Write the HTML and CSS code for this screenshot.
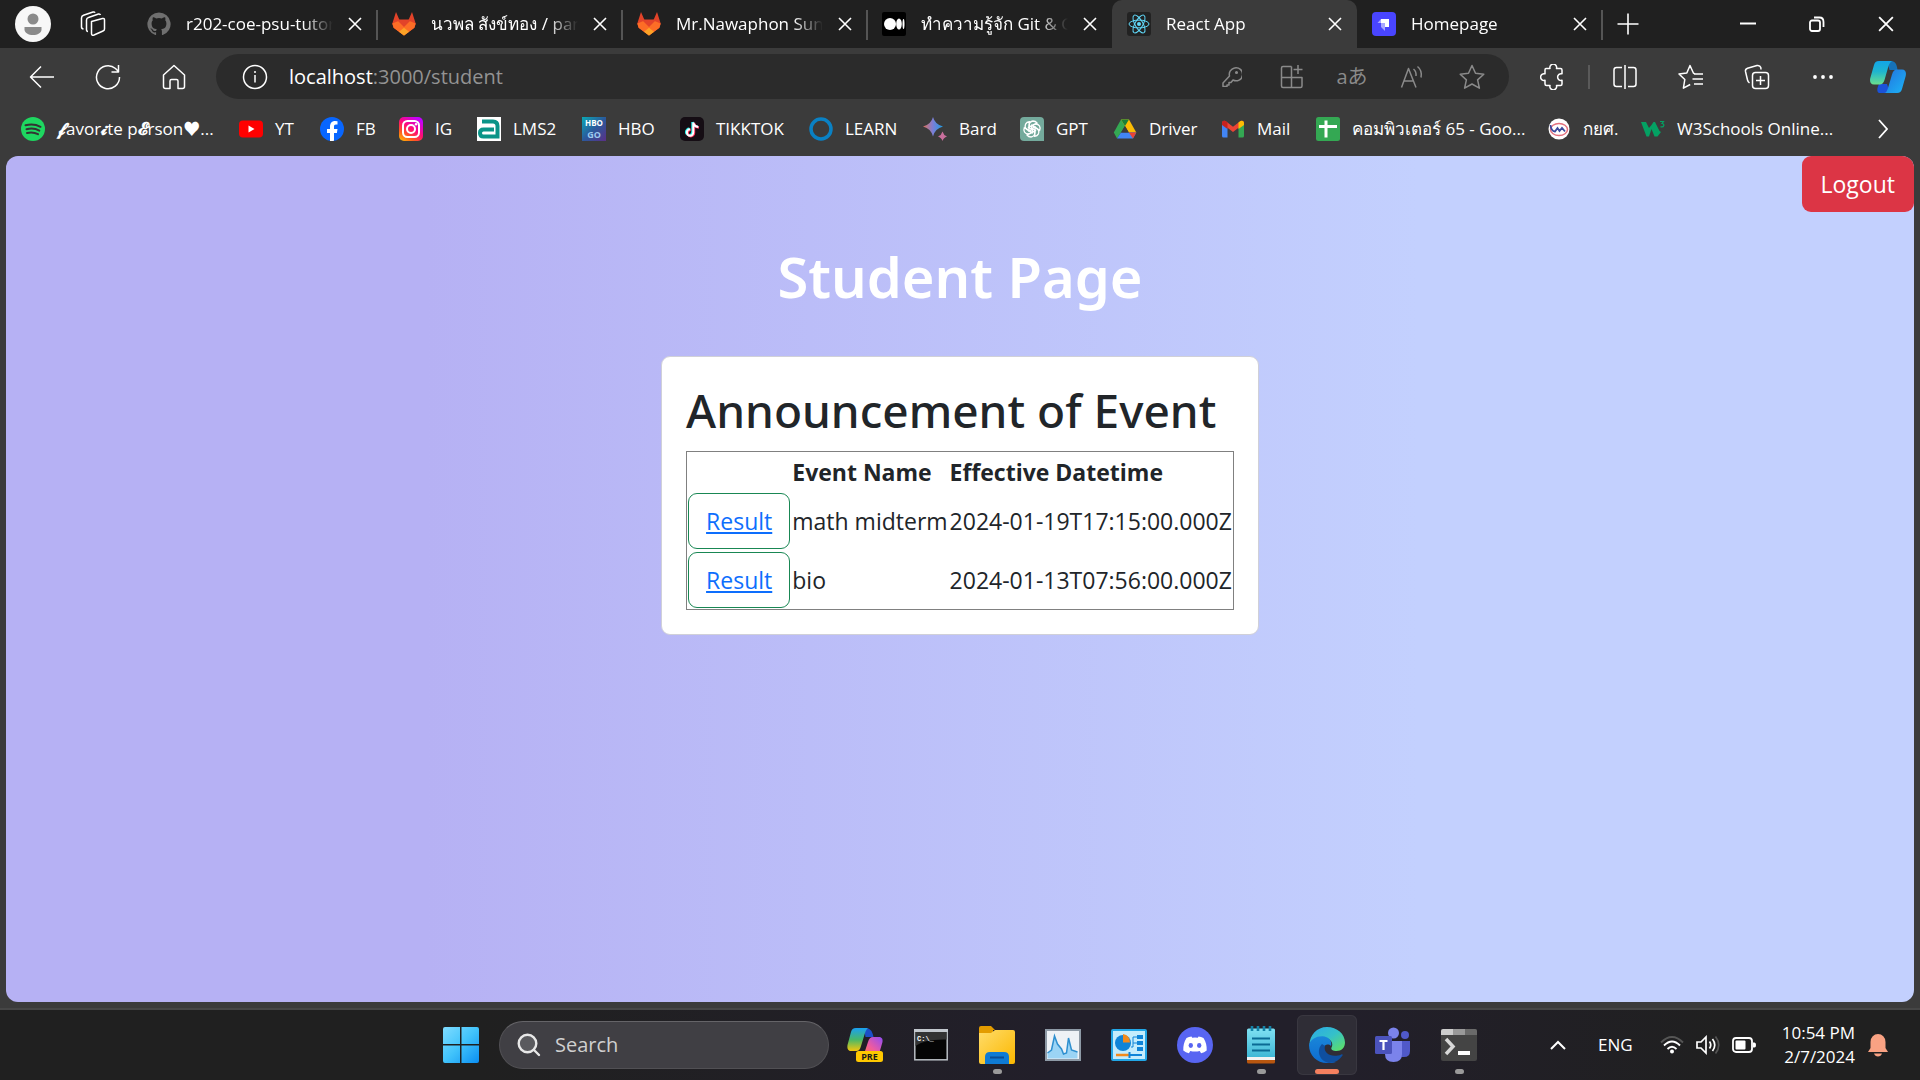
FILE: index.html
```html
<!DOCTYPE html>
<html lang="en">
<head>
<meta charset="utf-8">
<title>React App</title>
<link rel="stylesheet" href="styles.css">
</head>
<body>
<svg class="defs" aria-hidden="true">
  <defs>
    <linearGradient id="cp-a" x1="0" y1="0" x2="0" y2="1"><stop offset="0" stop-color="#12a5e8"/><stop offset=".45" stop-color="#1fb5cf"/><stop offset="1" stop-color="#6ae08d"/></linearGradient>
    <linearGradient id="cp-b" x1="0" y1="0" x2="1" y2="1"><stop offset="0" stop-color="#2370de"/><stop offset="1" stop-color="#1cb4f5"/></linearGradient>
    <linearGradient id="cp-c" x1="0" y1="0" x2="0" y2="1"><stop offset="0" stop-color="#1aa0f2"/><stop offset=".5" stop-color="#47b86a"/><stop offset="1" stop-color="#f5c60b"/></linearGradient>
    <linearGradient id="cp-d" x1="1" y1="0" x2="0" y2="1"><stop offset="0" stop-color="#8f4cf5"/><stop offset=".6" stop-color="#ee5ba0"/><stop offset="1" stop-color="#ff7a50"/></linearGradient>
    <linearGradient id="ig" x1="0" y1="1" x2=".7" y2="0"><stop offset="0" stop-color="#ffc800"/><stop offset=".3" stop-color="#ff5a1f"/><stop offset=".6" stop-color="#ff0a7a"/><stop offset="1" stop-color="#c400ff"/></linearGradient>
    <linearGradient id="hbo" x1="0" y1="0" x2="1" y2="1"><stop offset="0" stop-color="#0aa9b5"/><stop offset=".5" stop-color="#2a5a9c"/><stop offset="1" stop-color="#5b2f86"/></linearGradient>
    <linearGradient id="bard" x1="0" y1="0" x2="1" y2="0"><stop offset="0" stop-color="#e0705c"/><stop offset=".5" stop-color="#7a7fd8"/><stop offset="1" stop-color="#1e9be0"/></linearGradient>
    <linearGradient id="win" x1="0" y1="0" x2="1" y2="1"><stop offset="0" stop-color="#7fdcff"/><stop offset=".5" stop-color="#41c3fb"/><stop offset="1" stop-color="#0a8ef2"/></linearGradient>
    <linearGradient id="folder" x1="0" y1="0" x2="1" y2="1"><stop offset="0" stop-color="#ffdc6a"/><stop offset="1" stop-color="#fbb800"/></linearGradient>
    <linearGradient id="edge-top" x1="0" y1="0" x2="1" y2="1"><stop offset="0" stop-color="#2aa8ea"/><stop offset=".5" stop-color="#35c1c8"/><stop offset="1" stop-color="#63e25a"/></linearGradient>
    <linearGradient id="edge-body" x1="0" y1="0" x2="0" y2="1"><stop offset="0" stop-color="#1a86d9"/><stop offset="1" stop-color="#0d6cd0"/></linearGradient>
    <linearGradient id="note" x1="0" y1="0" x2="0" y2="1"><stop offset="0" stop-color="#7fe0f2"/><stop offset="1" stop-color="#3fb8d6"/></linearGradient>
    <symbol id="close" viewBox="0 0 14 14"><path d="M1 1l12 12M13 1L1 13" fill="none" stroke="#fff" stroke-width="1.6"/></symbol>
    <symbol id="gitlab" viewBox="0 0 24 24"><path d="M4 0l3.700 8.500h8.600L20 0l3.700 11.500-1.300 4.300L12 23.500 1.600 15.800.3 11.500z" fill="#e24329"/><path d="M.3 11.500l7.400-3 8.600 0 7.400 3-1.300 4.300L12 23.500 1.600 15.800z" fill="#fc6d26"/><path d="M4.500 7.500h15L12 15z" fill="#e24329"/><path d="M7 19.800l5-4 5 4-5 3.700z" fill="#fca326"/></symbol>
  </defs>
</svg>

<div class="browser">
  <header class="tabstrip">
    <button class="profile" aria-label="Profile"><svg width="36" height="36" viewBox="0 0 36 36"><circle cx="18" cy="18" r="18" fill="#f7f7f7"/><circle cx="18" cy="13" r="5.500" fill="#8a8a8a"/><path d="M9.500 21h17v2.500c0 3.500-4 5.500-8.500 5.500s-8.500-2-8.500-5.500z" fill="#8a8a8a"/></svg></button>
    <button class="workspaces" aria-label="Workspaces"><svg width="26" height="26" viewBox="0 0 26 26" fill="none" stroke="#fff" stroke-width="1.500" stroke-linejoin="round"><path d="M11.500 10.500l11-3q2-.4 2 1.500v9q0 1.500-1.500 2l-9 4q-2.500.8-2.500-1.500z"/><path d="M8 20.500q-1.500 0-1.500-2V9q0-2 2-2.500l10-3.500q1.500-.3 2 1"/><path d="M3.500 18q-2-.2-2-2V7q0-2 2-2.800L13 1q1.500-.4 2 .8"/></svg></button>
    <nav class="tabs" aria-label="Tabs">
      <div class="tab"><svg width="24" height="24" viewBox="0 0 24 24"><path fill="#6f6f6f" d="M12 .5a11.600 11.600 0 0 0-3.700 22.600c.6.100.8-.3.800-.6v-2.200c-3.200.7-3.900-1.400-3.900-1.400-.5-1.300-1.300-1.700-1.300-1.700-1.100-.7.100-.7.100-.7 1.200.1 1.800 1.200 1.800 1.200 1 1.800 2.700 1.300 3.400 1 .1-.8.4-1.300.7-1.600-2.600-.3-5.300-1.300-5.300-5.700 0-1.300.5-2.300 1.200-3.100-.1-.3-.5-1.500.1-3.100 0 0 1-.3 3.200 1.200a11 11 0 0 1 5.800 0c2.200-1.500 3.200-1.200 3.200-1.200.6 1.600.2 2.800.1 3.100.8.800 1.200 1.800 1.200 3.100 0 4.500-2.700 5.400-5.300 5.700.4.400.8 1.100.8 2.200v3.200c0 .3.200.7.800.6A11.600 11.600 0 0 0 12 .5z"/></svg><a class="tab-title" href="#">r202-coe-psu-tutor</a><button class="tab-close" aria-label="Close tab"><svg width="14" height="14"><use href="#close"/></svg></button></div>
      <div class="tab"><svg width="24" height="24"><use href="#gitlab"/></svg><a class="tab-title" href="#">นวพล สังข์ทอง / pan</a><button class="tab-close" aria-label="Close tab"><svg width="14" height="14"><use href="#close"/></svg></button></div>
      <div class="tab"><svg width="24" height="24"><use href="#gitlab"/></svg><a class="tab-title" href="#">Mr.Nawaphon Sun</a><button class="tab-close" aria-label="Close tab"><svg width="14" height="14"><use href="#close"/></svg></button></div>
      <div class="tab no-rule"><svg width="24" height="24" viewBox="0 0 24 24"><rect width="24" height="24" rx="2" fill="#000"/><circle cx="8" cy="12" r="6" fill="#fff"/><ellipse cx="17" cy="12" rx="2.800" ry="5.500" fill="#fff"/><ellipse cx="21.500" cy="12" rx="1" ry="5" fill="#fff"/></svg><a class="tab-title" href="#">ทำความรู้จัก Git &amp; G</a><button class="tab-close" aria-label="Close tab"><svg width="14" height="14"><use href="#close"/></svg></button></div>
      <div class="tab active"><svg width="24" height="24" viewBox="0 0 24 24"><rect width="24" height="24" rx="3" fill="#222"/><circle cx="12" cy="12" r="2" fill="#61dafb"/><g fill="none" stroke="#61dafb"><ellipse cx="12" cy="12" rx="10" ry="3.900"/><ellipse cx="12" cy="12" rx="10" ry="3.900" transform="rotate(60 12 12)"/><ellipse cx="12" cy="12" rx="10" ry="3.900" transform="rotate(120 12 12)"/></g></svg><a class="tab-title" href="#">React App</a><button class="tab-close" aria-label="Close tab"><svg width="14" height="14"><use href="#close"/></svg></button></div>
      <div class="tab"><svg width="24" height="24" viewBox="0 0 24 24"><rect width="24" height="24" rx="4" fill="#4945ff"/><path d="M9 7h8v8h-4v-4H9z" fill="#fff"/><path d="M5.500 11L9 7v4h4v8l-4-4v-4z" fill="#a9a7ff"/></svg><a class="tab-title" href="#">Homepage</a><button class="tab-close" aria-label="Close tab"><svg width="14" height="14"><use href="#close"/></svg></button></div>
    </nav>
    <button class="new-tab" aria-label="New tab"><svg width="22" height="22" viewBox="0 0 22 22" stroke="#fff" stroke-width="1.600"><path d="M11 .5v21M.5 11h21"/></svg></button>
    <div class="window-controls">
      <button aria-label="Minimize"><svg width="16" height="16" viewBox="0 0 16 16" stroke="#fff" stroke-width="2"><path d="M0 7.500h16"/></svg></button>
      <button aria-label="Restore"><svg width="16" height="16" viewBox="0 0 16 16" fill="none" stroke="#fff" stroke-width="1.800"><rect x="1" y="4.500" width="10" height="10.500" rx="2"/><path d="M5 1.500h5.500Q14.500 1.500 14.500 6v5"/></svg></button>
      <button aria-label="Close"><svg width="16" height="16"><use href="#close"/></svg></button>
    </div>
  </header>

  <div class="toolbar">
    <div class="nav-buttons">
      <button aria-label="Back"><svg width="26" height="24" viewBox="0 0 26 24"><path d="M25 12H2M12 1.500L1.500 12 12 22.500"/></svg></button>
      <button aria-label="Refresh"><svg width="26" height="26" viewBox="0 0 26 26"><path d="M24.500 13A11.500 11.500 0 1 1 20.500 4.500L23.500 7.500M23.500 1v7h-7"/></svg></button>
      <button aria-label="Home"><svg width="24" height="26" viewBox="0 0 24 26"><path d="M1.500 11L12 1.500 22.500 11v11.500q0 2-2 2H16V17q0-1.500-1.500-1.500h-5Q8 15.500 8 17v7.500H3.500q-2 0-2-2z"/></svg></button>
    </div>
    <div class="address">
      <button aria-label="Site information"><svg width="26" height="26" viewBox="0 0 26 26"><circle cx="13" cy="13" r="11.500"/><path d="M13 11v7.500M13 7v2"/></svg></button>
      <div class="url"><span class="host">localhost</span>:3000/student</div>
      <div class="address-actions">
        <button aria-label="Passwords"><svg width="20" height="20" viewBox="0 0 20 20"><path d="M12.500 1a6.500 6.500 0 1 1-1.500 12l-2 2.500H7V18H5v1.500H1V16l6.500-7A6.500 6.500 0 0 1 12.500 1z"/><circle cx="14.500" cy="5.500" r=".8"/></svg></button>
        <button aria-label="App available"><svg width="24" height="24" viewBox="0 0 24 24"><path d="M11.500 1.500H3q-1.500 0-1.500 1.500v18q0 1.500 1.500 1.500h17.500q1.500 0 1.500-1.500v-8.500H1.500M11.500 1.500v21M18 0v9M13.500 4.500h9"/></svg></button>
        <button class="translate" aria-label="Translate">aあ</button>
        <button aria-label="Read aloud"><svg width="24" height="24" viewBox="0 0 24 24"><path d="M1.500 22.500L8.500 3.500l7.500 19M4 16h9.500M13.500 4q3 2.500 2.500 7M17.500 1.500q5 4 3.500 11"/></svg></button>
        <button aria-label="Add favorite"><svg width="26" height="26" viewBox="0 0 26 26"><path d="M13 1.500l3.500 7.800 8.300.9-6.200 5.700 1.800 8.300L13 20l-7.400 4.200 1.800-8.300L1.200 10.200l8.300-.9z"/></svg></button>
      </div>
    </div>
    <div class="tool-buttons">
      <button aria-label="Extensions"><svg width="26" height="26" viewBox="0 0 26 26"><path d="M6 4.500h4a3.400 3.400 0 1 1 6.500 0h4q1.500 0 1.500 1.500v3.800a3.400 3.400 0 1 0 0 6.500V20q0 1.500-1.500 1.500h-4a3.400 3.400 0 1 1-6.500 0H6.500Q5 21.500 5 20v-3.700a3.400 3.400 0 1 1 0-6.500V6q0-1.500 1-1.500z"/></svg></button>
      <span class="rule"></span>
      <button aria-label="Split screen"><svg width="24" height="26" viewBox="0 0 24 26"><path d="M9 3.500H3.500q-2.500 0-2.500 2.500v14q0 2.500 2.500 2.500H9M15 3.500h5.500q2.500 0 2.500 2.500v14q0 2.500-2.500 2.500H15M12 1v24"/></svg></button>
      <button aria-label="Favorites"><svg width="26" height="26" viewBox="0 0 26 26"><path d="M17 10l-1.500-.8L12 1.500 8.800 9 1 10l5.800 5.500-1.400 8.700 6.800-3.700M16 10h9M14.500 15H25M16 20h9"/></svg></button>
      <button aria-label="Collections"><svg width="26" height="26" viewBox="0 0 26 26"><rect x="8.500" y="8.500" width="16" height="16" rx="3"/><path d="M16.500 12v9M12 16.500h9M5.500 19Q4 18 3.500 16L1.500 7.500Q1 5 3.500 4.200L13 1.500Q16 1 16.800 3.500L17 5.500"/></svg></button>
      <button aria-label="Settings and more"><svg width="20" height="6" viewBox="0 0 20 6"><g fill="#fff" stroke="none"><circle cx="2" cy="3" r="1.900"/><circle cx="10" cy="3" r="1.900"/><circle cx="18" cy="3" r="1.900"/></g></svg></button>
    </div>
    <button class="copilot" aria-label="Copilot"><svg width="36" height="32" viewBox="0 0 36 32"><path d="M9 32c-2.500-1-2-5 0-9h8l3 9z" fill="#1b52d8" stroke="none"/><path d="M20 0c5 0 6.500 2 7.500 9h-8L17 0z" fill="#1672b8" stroke="none"/><path d="M9 0h14c-2 0-3.500 2-4.500 5l-4 14c-1 3-2.500 4.500-5 4.500H4c-3.500 0-4.500-3-3.700-6.500L4 4c.8-2.500 2-4 5-4z" fill="url(#cp-a)" stroke="none"/><path d="M27 8.500h5c3.500 0 4.500 3 3.700 6.500L32 28c-.8 2.500-2 4-5 4H14c2 0 3-2 4-5l4-13.500c1-3.500 2.500-5 5-5z" fill="url(#cp-b)" stroke="none"/></svg></button>
  </div>

  <nav class="favorites" aria-label="Favorites bar">
    <a href="#"><svg width="24" height="24" viewBox="0 0 24 24"><circle cx="12" cy="12" r="12" fill="#1ed760"/><path d="M4.500 8.300q8-2.300 15 1.500M5.500 12.300q7-2 12.800 1.300M6 16q6-1.500 11 1.200" fill="none" stroke="#333" stroke-width="2" stroke-linecap="round"/></svg><span><b>𝓯</b>avor<b>𝓲</b>te p<b>𝓔</b>rson♥...</span></a>
    <a href="#"><svg width="24" height="24" viewBox="0 0 24 24"><rect y="3.500" width="24" height="17" rx="4" fill="#f00"/><path d="M9.500 8.500l6 3.500-6 3.500z" fill="#fff"/></svg>YT</a>
    <a href="#"><svg width="24" height="24" viewBox="0 0 24 24"><circle cx="12" cy="12" r="12" fill="#0866ff"/><path d="M10 24v-8H7v-4h3v-2c0-4 2-6 5-6l2.500.2v3.400H16c-1.500 0-2 .8-2 2.200V12h3.500l-.6 4H14v7.800q-2 .4-4 .2z" fill="#fff"/></svg>FB</a>
    <a href="#"><svg width="24" height="24" viewBox="0 0 24 24"><rect width="24" height="24" rx="5" fill="url(#ig)"/><g fill="none" stroke="#fff" stroke-width="2"><rect x="4" y="4" width="16" height="16" rx="4.500"/><circle cx="12" cy="12" r="4"/></g><circle cx="17" cy="7.200" r="1.200" fill="#fff"/></svg>IG</a>
    <a href="#"><svg width="24" height="24" viewBox="0 0 24 24"><path d="M0 0h24v24H0z" fill="#fff"/><path d="M5 4.500h11q4.500 0 4.500 4.500v10.500H6.500q-3.500 0-3.500-3.500t3.500-3.500H17" fill="none" stroke="#0a9488" stroke-width="4"/></svg>LMS2</a>
    <a href="#"><svg width="24" height="24" viewBox="0 0 24 24"><path d="M0 0h24v24H0z" fill="url(#hbo)"/><text class="hbo-mark" x="12" y="9" fill="#fff">HBO</text><text class="go-mark" x="12" y="21" fill="#9cc9ee">GO</text></svg>HBO</a>
    <a href="#"><svg width="24" height="24" viewBox="0 0 24 24"><rect width="24" height="24" rx="5" fill="#150d14"/><g fill="none" stroke-width="2.400"><path d="M12.500 5v10a3.200 3.200 0 1 1-3.200-3.200M12.500 5q.7 4 5 4.500" stroke="#25f4ee"/><path d="M14 6v10a3.200 3.200 0 1 1-3.200-3.200M14 6q.7 4 5 4.500" stroke="#fe2c55"/><path d="M13.300 5.500v10a3.200 3.200 0 1 1-3.200-3.200M13.300 5.500q.7 4 5 4.500" stroke="#fff" stroke-width="2"/></g></svg>TIKKTOK</a>
    <a href="#"><svg width="24" height="24" viewBox="0 0 24 24"><circle cx="12" cy="12" r="10" fill="none" stroke="#0a81c4" stroke-width="3.500"/></svg>LEARN</a>
    <a href="#"><svg width="24" height="24" viewBox="0 0 24 24"><path d="M10 0q2 7.500 10 9.500-8 2-10 10Q8 11.500 0 9.500 8 7.500 10 0z" fill="url(#bard)"/><path d="M19.500 14.500q1 3.700 4.500 5-3.500 1-4.500 4.500-1-3.500-4.500-4.500 3.500-1.300 4.500-5z" fill="#c86f9c"/></svg>Bard</a>
    <a href="#"><svg width="24" height="24" viewBox="0 0 24 24"><path d="M4 0h16q4 0 4 4v20H4q-4 0-4-4V4q0-4 4-4z" fill="#74aa9c"/><g fill="none" stroke="#fff" stroke-width="1.300"><path id="petal" d="M9 15V8.500q.3-4 4-4.500 2.500 0 4 2L11.500 9.300V13"/><use href="#petal" transform="rotate(60 12 12)"/><use href="#petal" transform="rotate(120 12 12)"/><use href="#petal" transform="rotate(180 12 12)"/><use href="#petal" transform="rotate(240 12 12)"/><use href="#petal" transform="rotate(300 12 12)"/></g></svg>GPT</a>
    <a href="#"><svg width="24" height="24" viewBox="0 0 24 24"><path d="M8 2.500h8l-4 6.500-4 6.500-4 6-3.200-6z" fill="#34a853"/><path d="M8 2.500h8l7.300 13h-7.500z" fill="#fbbc04"/><path d="M12 9l4-6.500H8z" fill="#188038"/><path d="M8 15.500h15.300L20 21.500H4z" fill="#4285f4"/><path d="M15.800 15.500h7.500L20 21.500z" fill="#ea4335"/><path d="M12 9l3.800 6.500H8z" fill="#3b3b3b"/></svg>Driver</a>
    <a href="#"><svg width="24" height="24" viewBox="0 0 24 24"><path d="M1 6v13q0 1.500 1.500 1.500H6.500V10z" fill="#4285f4"/><path d="M23 6v13q0 1.500-1.500 1.500H17.500V10z" fill="#34a853"/><path d="M1 6.500q0-3.500 3.500-2.500L12 9.800 19.500 4Q23 3 23 6.500L12 15z" fill="#ea4335"/><path d="M17.500 5.500l2-1.500Q23 3 23 6.500V8l-5.500 4z" fill="#fbbc04"/><path d="M1 8V6.500Q1 3 4.500 4l2 1.500V12z" fill="#c5221f"/></svg>Mail</a>
    <a href="#"><svg width="24" height="24" viewBox="0 0 24 24"><rect width="24" height="24" rx="2.500" fill="#34a853"/><path d="M10 3.500v17M3 9.500h18" stroke="#fff" stroke-width="3"/></svg>คอมพิวเตอร์ 65 - Goo...</a>
    <a href="#"><svg width="24" height="24" viewBox="0 0 24 24"><circle cx="12" cy="12" r="10.500" fill="#fff"/><ellipse cx="12" cy="12.500" rx="8.500" ry="6" fill="none" stroke="#e4707c" stroke-width="1.500"/><path d="M3.500 8q.5 6 4.500 6.500l2.500-3.500 2 3 2.500-3 3 3.500" fill="none" stroke="#3c4a9c" stroke-width="1.800"/></svg>กยศ.</a>
    <a href="#"><svg width="24" height="24" viewBox="0 0 24 24"><path d="M0 5h5l3 6 2.500-3 2-3h1.500l4.500 9 1.500 1-3.500 4.500h-3L10.500 12 8 19.500H5.500z" fill="#04a163"/><path d="M19 4.500h3.500L21 6.500q2 .2 1.800 2-.6 2-3.300 1.200" fill="none" stroke="#04a163" stroke-width="1.200"/></svg>W3Schools Online...</a>
    <button aria-label="More favorites"><svg width="10" height="20" viewBox="0 0 10 20" fill="none" stroke="#fff" stroke-width="1.800"><path d="M1 1l8 9-8 9"/></svg></button>
  </nav>

  <main class="page">
    <button class="logout">Logout</button>
    <h1>Student Page</h1>
    <section class="card">
      <h2>Announcement of Event</h2>
      <table>
        <thead><tr><td></td><th scope="col">Event Name</th><th scope="col">Effective Datetime</th></tr></thead>
        <tbody>
          <tr><td><div class="result"><a href="#">Result</a></div></td><td>math midterm</td><td>2024-01-19T17:15:00.000Z</td></tr>
          <tr><td><div class="result"><a href="#">Result</a></div></td><td>bio</td><td>2024-01-13T07:56:00.000Z</td></tr>
        </tbody>
      </table>
    </section>
  </main>
</div>

<footer class="taskbar">
  <div class="apps">
    <button class="app" aria-label="Start"><svg width="36" height="36" viewBox="0 0 36 36" fill="url(#win)"><path d="M2 0h15v17H0V2q0-2 2-2zM18.500 0H34q2 0 2 2v15H18.500zM0 18.500h17V36H2q-2 0-2-2zM18.500 18.500H36V34q0 2-2 2H18.500z"/></svg></button>
    <label class="search"><svg width="24" height="24" viewBox="0 0 24 24" fill="#5a5a5e" stroke="#e8e8e8" stroke-width="2.400" stroke-linecap="round"><circle cx="10.500" cy="10.500" r="8.800"/><path d="M17 17l5 5"/></svg><input type="text" placeholder="Search" aria-label="Search"></label>
    <button class="app" aria-label="Copilot preview"><svg width="36" height="36" viewBox="0 0 36 36"><path d="M17 1c6 0 8 2 9.500 9h-8z" fill="#1c4fc8"/><path d="M9 1h13c-2 0-3 2-4 5l-4 13c-1 4-2.500 5-5 5H4c-3 0-4-2.500-3.500-6L4 5c.8-2.500 2-4 5-4z" fill="url(#cp-c)"/><path d="M26 10h6c3 0 4 2.500 3.500 5L32 27H17l4-12c1-3.500 2.500-5 5-5z" fill="url(#cp-d)"/><rect x="9" y="24" width="27" height="11" rx="2.500" fill="#ffc800"/><text class="pre-mark" x="22.500" y="33">PRE</text></svg></button>
    <button class="app" aria-label="Command Prompt"><svg width="34" height="32" viewBox="0 0 34 32"><rect x=".8" y=".8" width="32.400" height="30" fill="#050505" stroke="#b9bec4" stroke-width="1.500"/><path d="M1.500 1.500h31v9Q10 10 1.500 17z" fill="#333"/><path d="M0 0h34v3H0z" fill="#c3c8ce"/><text class="cmd-mark" x="3" y="12" fill="#fff">C:\_</text></svg></button>
    <button class="app running" aria-label="File Explorer"><svg width="36" height="38" viewBox="0 0 36 38"><path d="M0 2q0-2 2-2h10l4 4h-2v6H0z" fill="#e39c00"/><path d="M0 7h12l4-3h18q2 0 2 2v30q0 2-2 2H2q-2 0-2-2z" fill="url(#folder)"/><path d="M6 38v-7q0-5 5-5h14q5 0 5 5v7z" fill="#0f7bd4"/><path d="M11 31.500h14" stroke="#0a4d94" stroke-width="2"/></svg></button>
    <button class="app" aria-label="Resource Monitor"><svg width="36" height="32" viewBox="0 0 36 32"><rect x="1" y="1" width="34" height="30" fill="#eef2f6" stroke="#8e9aa6" stroke-width="2"/><path d="M2.500 24l4-3 3-14 3 8 4 5 2 5 3-1 2-15 3 12 6 2v6.500h-30z" fill="#9bd4f5"/><path d="M2.500 24l4-3 3-14 3 8 4 5 2 5 3-1 2-15 3 12 6 2" fill="none" stroke="#2e8fcf" stroke-width="1.500"/></svg></button>
    <button class="app" aria-label="Control Panel"><svg width="36" height="32" viewBox="0 0 36 32"><rect x="1" y="1" width="34" height="30" rx="1" fill="#c4ecfc" stroke="#22a6e6" stroke-width="2"/><circle cx="12" cy="14" r="8" fill="#0f84d8"/><path d="M12 5v8.500h7Q19 6 12 5z" fill="#f28a1c"/><g fill="#0f84d8"><path d="M26 6h6v4h-6zM26 12h6v4h-6zM26 18h6v4h-6z"/></g><path d="M20 18h2V8h4M22 14h4" fill="none" stroke="#0f84d8"/><path d="M5 26h13" stroke="#f28a1c" stroke-width="2.500"/><path d="M18 26h13M18.500 23v6" stroke="#0f84d8" stroke-width="2"/></svg></button>
    <button class="app" aria-label="Discord"><svg width="36" height="36" viewBox="0 0 36 36"><circle cx="18" cy="18" r="18" fill="#5865f2"/><path d="M14.500 9.500l.7 1.300q2.800-.4 5.600 0l.7-1.300q2.500.3 5 1.600 3.500 5.500 3.200 12.400-2.500 2-5.600 2.800l-1.400-2.200q-4.700 1-9.400 0l-1.400 2.200Q8.800 25.500 6.300 23.500 6 16.600 9.500 11.100q2.500-1.300 5-1.600z" fill="#fff"/><ellipse cx="13.800" cy="18.500" rx="2.200" ry="2.400" fill="#5865f2"/><ellipse cx="22.200" cy="18.500" rx="2.200" ry="2.400" fill="#5865f2"/></svg></button>
    <button class="app running" aria-label="Notepad"><svg width="28" height="38" viewBox="0 0 28 38"><path d="M0 30h28v6q0 1.500-1.500 1.500h-25Q0 37.500 0 36z" fill="#b8560f"/><path d="M0 29h28v5H0z" fill="#f2f2f2"/><path d="M0 4q0-1.500 1.500-1.500h25Q28 2.500 28 4v27H0z" fill="url(#note)"/><path d="M5 12.500h18M5 18.500h18M5 24.500h18" stroke="#0b6a94" stroke-width="2"/><path d="M5 0v5M11 0v5M17 0v5M23 0v5" stroke="#1583a8" stroke-width="2.600"/></svg></button>
    <button class="app running current" aria-label="Microsoft Edge"><svg width="36" height="36" viewBox="0 0 36 36"><path d="M.5 18C.5 8 8 0 18 0s18 7 18 15.500c0 5-3.500 8.500-8.500 8.500-3.500 0-6-1.500-5-3.500 2.500-4-1-9.500-7-9.500C8 11 2 14 .5 18z" fill="url(#edge-top)"/><path d="M0 18C1 12.500 7 9 13.500 9.200c6 .2 10 4.800 8.500 9.800-3-3-8-1-8 4.500 0 7 6 12 13 11.500-3 1-6 1-9 1C8 36 0 28.500 0 18z" fill="url(#edge-body)"/><path d="M13 17c-6 6-3 17 7 18.900 6 0 10.500-3 13.500-7.500.5-1-.5-1.500-1.200-1-9 4-18.500-1-16.300-8.400z" fill="#0f4f9f"/></svg></button>
    <button class="app" aria-label="Microsoft Teams"><svg width="36" height="36" viewBox="0 0 36 36"><circle cx="30" cy="8" r="4" fill="#5059c9"/><path d="M25 14h10v10q0 6-6 6h-4z" fill="#5059c9"/><circle cx="18.500" cy="6" r="5.500" fill="#7b83eb"/><path d="M10 14h17v13q0 8-8.500 8T10 27z" fill="#7b83eb"/><rect y="9" width="17" height="18" rx="1.500" fill="#4b53bc"/><path d="M4.500 14h8M8.500 14v9" stroke="#fff" stroke-width="2.200"/></svg></button>
    <button class="app running" aria-label="Terminal"><svg width="36" height="32" viewBox="0 0 36 32"><rect width="36" height="32" rx="2" fill="#444"/><path d="M2 0h10v6H0V2q0-2 2-2z" fill="#ccc"/><path d="M12 0h12v6H12z" fill="#999"/><path d="M24 0h10q2 0 2 2v4H24z" fill="#6a6a6a"/><path d="M5 10l7 7.500-7 7.500" fill="none" stroke="#d8d8d8" stroke-width="3.500"/><path d="M17 24h12" stroke="#fff" stroke-width="4"/></svg></button>
  </div>
  <div class="tray">
    <button aria-label="Show hidden icons"><svg width="16" height="10" viewBox="0 0 16 10" fill="none" stroke="#fff" stroke-width="2"><path d="M1 9l7-7 7 7"/></svg></button>
    <button class="lang">ENG</button>
    <button class="status" aria-label="Network, volume and battery">
      <svg width="24" height="20" viewBox="0 0 24 20" fill="none" stroke-width="1.900"><path d="M1 7.500q11-11 22 0" stroke="#555"/><path d="M4 10.500q8-8 16 0M7.500 14q4.500-4.500 9 0" stroke="#fff"/><circle cx="12" cy="16.500" r="2" fill="#fff"/></svg>
      <svg width="24" height="20" viewBox="0 0 24 20" fill="none" stroke="#fff" stroke-width="1.700"><path d="M1 7h4l5-5v16l-5-5H1z"/><path d="M13.500 6.500q2.500 3.500 0 7M16.500 4q4.500 6 0 12"/><path d="M19.500 1.500q6.500 8.500 0 17" stroke="#555"/></svg>
      <svg width="24" height="20" viewBox="0 0 24 20"><rect x="1" y="3" width="19" height="14" rx="3" fill="none" stroke="#fff" stroke-width="1.800"/><rect x="3.500" y="5.500" width="10" height="9" rx="1" fill="#fff"/><path d="M21 7.500h1.500q1.500 0 1.500 2.500t-1.500 2.500H21z" fill="#fff"/></svg>
    </button>
    <button class="clock"><span>10:54 PM</span><span>2/7/2024</span></button>
    <button aria-label="Notifications"><svg width="20" height="24" viewBox="0 0 20 24" fill="#f9a283"><path d="M2.500 9a7.500 8 0 0 1 15 0v6l2.500 4H0l2.500-4zM6 20.500h8q-1 3-4 3t-4-3z"/></svg></button>
  </div>
</footer>
</body>
</html>
```
FILE: styles.css
```css
* { box-sizing: border-box; }

body {
  margin: 0;
  min-height: 100vh;
  display: flex;
  flex-direction: column;
  background: #202020;
  color: #fff;
  font: 17px/24px "Open Sans", "Noto Sans", "Noto Sans CJK JP", sans-serif;
}

.defs { position: absolute; width: 0; height: 0; }

svg { display: block; flex: none; }

a { color: inherit; text-decoration: none; }

button {
  padding: 0;
  border: 0;
  background: none;
  color: inherit;
  font: inherit;
  display: flex;
  align-items: center;
  justify-content: center;
}

.browser {
  flex: 1;
  display: flex;
  flex-direction: column;
  background: #3b3b3b;
  border-bottom: 2px solid #464646;
}

/* Tab strip */
.tabstrip {
  display: flex;
  height: 48px;
  background: #202020;
}

.profile { width: 66px; }
.workspaces { width: 54px; margin-right: 12px; }
.tabs { flex: 0 1 1470px; display: flex; min-width: 0; }

.tab {
  position: relative;
  flex: 1 1 0;
  min-width: 0;
  display: flex;
  align-items: center;
  gap: 15px;
  padding: 0 15px;
}

.tab:not(.active):not(.no-rule)::after {
  content: "";
  position: absolute;
  right: -1px;
  top: 10px;
  bottom: 8px;
  width: 2px;
  background: #555;
}

.tab.active { background: #3b3b3b; border-radius: 10px 10px 0 0; }

.tab-title {
  flex: 1;
  min-width: 0;
  overflow: hidden;
  white-space: nowrap;
  mask-image: linear-gradient(to right, #000 calc(100% - 30px), transparent);
}

.new-tab { width: 52px; }
.window-controls { margin-left: auto; display: flex; }
.window-controls button { width: 69px; }

/* Toolbar */
.toolbar {
  display: flex;
  align-items: center;
  height: 57px;
}

.toolbar svg {
  fill: none;
  stroke: #fff;
  stroke-width: 1.5;
  stroke-linejoin: round;
}

.nav-buttons { display: flex; padding: 0 9px; }
.nav-buttons button { width: 66px; height: 45px; }

.address {
  flex: 1;
  display: flex;
  align-items: center;
  height: 45px;
  padding: 0 7px 0 26px;
  border-radius: 23px;
  background: #2b2b2b;
}

.url { margin-left: 21px; color: #939393; font-size: 20px; }
.host { color: #fff; }
.address-actions { margin-left: auto; display: flex; }
.address-actions button { width: 60px; color: #8a8a8a; }
.address-actions svg { stroke: #8a8a8a; }
.translate { font-size: 20px; }

.tool-buttons { display: flex; align-items: center; padding: 0 0 0 11px; }
.tool-buttons button { width: 66px; height: 45px; }
.rule { width: 2px; height: 24px; margin: 0 2px; background: #5a5a5a; }
.copilot { width: 64px; }

/* Favorites bar: one column per bookmark, then the overflow arrow */
.favorites {
  display: grid;
  grid-template-columns: 218fr 81fr 79fr 78fr 105fr 98fr 129fr 114fr 97fr 93fr 108fr 95fr 231fr 94fr 223fr 38fr;
  align-items: center;
  height: 51px;
  padding: 0 18px 3px 21px;
}

.favorites a {
  display: flex;
  align-items: center;
  gap: 12px;
  min-width: 0;
  white-space: nowrap;
}

.hbo-mark { font: 700 8px "Open Sans", sans-serif; text-anchor: middle; }
.go-mark { font: 700 9px "Open Sans", sans-serif; text-anchor: middle; }

/* Web page */
.page {
  position: relative;
  flex: 1;
  margin: 0 6px 6px;
  padding: 84px 24px 24px;
  border-radius: 12px;
  overflow: hidden;
  background: linear-gradient(to right, #b6b1f4 22%, #c3d0fe 74%);
  color: #212529;
  font-size: 23px;
  line-height: 36px;
}

.logout {
  position: absolute;
  top: 0;
  right: 0;
  padding: 10px 19px;
  border-radius: 9px;
  background: #dc3545;
  color: #fff;
}

h1, h2 { margin: 0; font-family: "Noto Sans", "Open Sans", sans-serif; font-weight: 500; }

h1 {
  color: #fff;
  font-size: 56px;
  line-height: 72px;
  font-weight: 600;
  text-align: center;
}

.card {
  width: fit-content;
  margin: 44px auto 0;
  padding: 24px;
  border: 1px solid #d0d0d8;
  border-radius: 9px;
  background: #fff;
}

h2 { margin-bottom: 12px; font-size: 46px; line-height: 58px; }

table {
  width: 100%;
  border: 1px solid #808080;
  border-spacing: 0;
  text-align: left;
  white-space: nowrap;
}

td, th { padding: 2px 1px 1px; }

.result {
  padding: 9px 17px;
  border: 1px solid #198754;
  border-radius: 9px;
}

.result a { color: #0d6efd; text-decoration: underline; }

/* Taskbar */
.taskbar {
  display: grid;
  grid-template-columns: 1fr auto 1fr;
  height: 70px;
  background: linear-gradient(to right, #202020 25%, #221f2a 55%, #221f2a 70%, #202020 90%);
}

.apps {
  grid-column: 2;
  display: flex;
  align-items: center;
  gap: 6px;
}

.app { position: relative; width: 60px; height: 60px; border-radius: 6px; }
.app.current { background: #2f2d36; box-shadow: inset 0 0 0 1px #393740; }

.app.running::after {
  content: "";
  position: absolute;
  bottom: 1px;
  width: 9px;
  height: 5px;
  border-radius: 3px;
  background: #9a9a9a;
}

.app.current::after { width: 24px; background: #f4805f; }

.search {
  display: flex;
  align-items: center;
  gap: 14px;
  width: 330px;
  height: 48px;
  margin-left: 2px;
  padding: 0 17px;
  border: 1px solid #515054;
  border-top-color: #656468;
  border-radius: 24px;
  background: #403f44;
}

.search input {
  flex: 1;
  min-width: 0;
  padding: 0;
  border: 0;
  background: none;
  color: #d0d0d0;
  font: inherit;
  font-size: 20px;
}

.search input::placeholder { color: #d0d0d0; opacity: 1; }

.pre-mark { font: 700 9px "Open Sans", sans-serif; text-anchor: middle; fill: #1a1a1a; }
.cmd-mark { font: 700 7px "Liberation Mono", monospace; }

.tray {
  justify-self: end;
  display: flex;
  align-items: center;
  padding-right: 32px;
}

.lang { margin: 0 27px 0 32px; }
.status { gap: 12px; margin-right: 26px; }
.clock { flex-direction: column; align-items: flex-end; margin-right: 13px; }
```
